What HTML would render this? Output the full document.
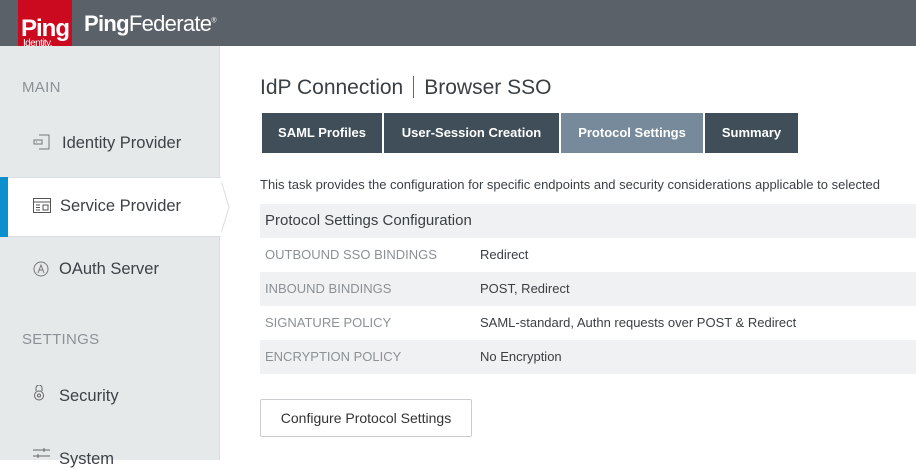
<!DOCTYPE html>
<html><head><style>
*{margin:0;padding:0;box-sizing:border-box}
body{width:916px;height:460px;overflow:hidden;background:#fff;font-family:"Liberation Sans",sans-serif;position:relative;color:#3a3f44}
.hdr{position:absolute;left:0;top:0;width:916px;height:46px;background:#5b6168}
.logo{position:absolute;left:18px;top:0;width:54px;height:51px;background:#cc0a1f;color:#fff}
.side{position:absolute;left:0;top:46px;width:220px;height:414px;background:#e6e9ea;border-right:1px solid #dadddf}
.sec{position:absolute;left:22px;font-size:15px;color:#8b9297;letter-spacing:.3px}
.item{position:absolute;left:62px;font-size:16.5px;color:#3d4247}
.ico{position:absolute;left:33px}
.act{position:absolute;left:0;top:177px;width:221px;height:60px;background:#fff;border-top:1px solid #dadddf;border-bottom:1px solid #dadddf}
.tab{position:absolute;top:113px;height:40px;background:#3f4e59;color:#fff;font-weight:bold;font-size:13px;line-height:40px;text-align:center}
.row{position:absolute;left:260px;width:656px;height:34px;line-height:34px;font-size:13px}
.row .k{position:absolute;left:5px;color:#8b9196}
.row .v{position:absolute;left:220px;color:#3a3f44}
</style></head><body>
<div class="hdr">
 <div class="logo"><div style="position:absolute;left:3px;top:15px;font-size:24px;font-weight:bold;letter-spacing:-1px">Ping</div><div style="position:absolute;left:5px;top:38px;font-size:10px;letter-spacing:-.6px">Identity.</div></div>
 <div style="position:absolute;left:84px;top:11px;color:#fff;font-size:22px;letter-spacing:-.7px"><b>Ping</b>Federate<sup style="font-size:7px">®</sup></div>
</div>
<div class="side">
 <div class="sec" style="top:33px">MAIN</div>
 <svg class="ico" style="top:88px" width="18" height="16" viewBox="0 0 18 16" fill="none" stroke="#777" stroke-width="1"><path d="M6 1h10v14H6M1 6h8v4H1zM3 8h1"/></svg>
 <div class="item" style="top:88px">Identity Provider</div>
 <div class="sec" style="top:285px">SETTINGS</div>
 <svg class="ico" style="top:339px" width="12" height="16" viewBox="0 0 12 16" fill="none" stroke="#666"><path d="M3 6V3a3 3 0 0 1 6 0v3"/><circle cx="6" cy="10.5" r="4.5"/><circle cx="6" cy="10.5" r="1.5"/></svg>
 <div class="item" style="top:341px;left:59px">Security</div>
 <svg class="ico" style="top:402px" width="17" height="12" viewBox="0 0 17 12" stroke="#666"><path d="M0 2h17M0 8h17M11 0v4M5 6v4"/></svg>
 <div class="item" style="top:404px;left:59px">System</div>
 <svg class="ico" style="top:215px" width="16" height="16" viewBox="0 0 16 16" fill="none" stroke="#777"><circle cx="8" cy="8" r="7"/><path d="M5 12l3-8 3 8M6 9h4"/></svg>
 <div class="item" style="top:214px;left:59px">OAuth Server</div>
</div>
<div class="act">
 <div style="position:absolute;left:0;top:-1px;width:8px;height:60px;background:#0b8fcf"></div>
 <svg style="position:absolute;left:33px;top:20px" width="18" height="15" viewBox="0 0 18 15" fill="none" stroke="#555"><rect x=".5" y=".5" width="17" height="14"/><path d="M.5 4h17M3 7h4M3 9.5h4M3 12h4M10 7h5v5h-5z"/></svg>
 <div style="position:absolute;left:60px;top:19px;font-size:16.5px;color:#3d4247">Service Provider</div>
</div>
<svg style="position:absolute;left:220px;top:176px" width="12" height="62"><path d="M0 1L9 31L0 61" fill="#fff" stroke="#dadddf"/><rect x="0" y="2" width="1.5" height="58" fill="#fff"/></svg>
<div style="position:absolute;left:260px;top:76px;font-size:21px;color:#3a3f44;white-space:nowrap">IdP Connection<span style="display:inline-block;width:1px;height:22px;background:#666;margin:0 10px;vertical-align:-4px"></span>Browser SSO</div>
<div class="tab" style="left:262px;width:120px">SAML Profiles</div>
<div class="tab" style="left:384px;width:175px">User-Session Creation</div>
<div class="tab" style="left:561px;width:142px;background:#778a9c">Protocol Settings</div>
<div class="tab" style="left:705px;width:93px">Summary</div>
<div style="position:absolute;left:260px;top:177px;font-size:13px;white-space:nowrap;color:#3a3f44">This task provides the configuration for specific endpoints and security considerations applicable to selected</div>
<div class="row" style="top:204px;background:#f0f1f2;font-size:15px"><span style="position:absolute;left:5px;color:#3a3f44">Protocol Settings Configuration</span></div>
<div class="row" style="top:238px"><span class="k">OUTBOUND SSO BINDINGS</span><span class="v">Redirect</span></div>
<div class="row" style="top:272px;background:#f0f1f2"><span class="k">INBOUND BINDINGS</span><span class="v">POST, Redirect</span></div>
<div class="row" style="top:306px"><span class="k">SIGNATURE POLICY</span><span class="v">SAML-standard, Authn requests over POST &amp; Redirect</span></div>
<div class="row" style="top:340px;background:#f0f1f2"><span class="k">ENCRYPTION POLICY</span><span class="v">No Encryption</span></div>
<div style="position:absolute;left:260px;top:399px;width:212px;height:38px;border:1px solid #c9cdd0;border-radius:2px;text-align:center;line-height:37px;font-size:14px;color:#333">Configure Protocol Settings</div>
</body></html>
